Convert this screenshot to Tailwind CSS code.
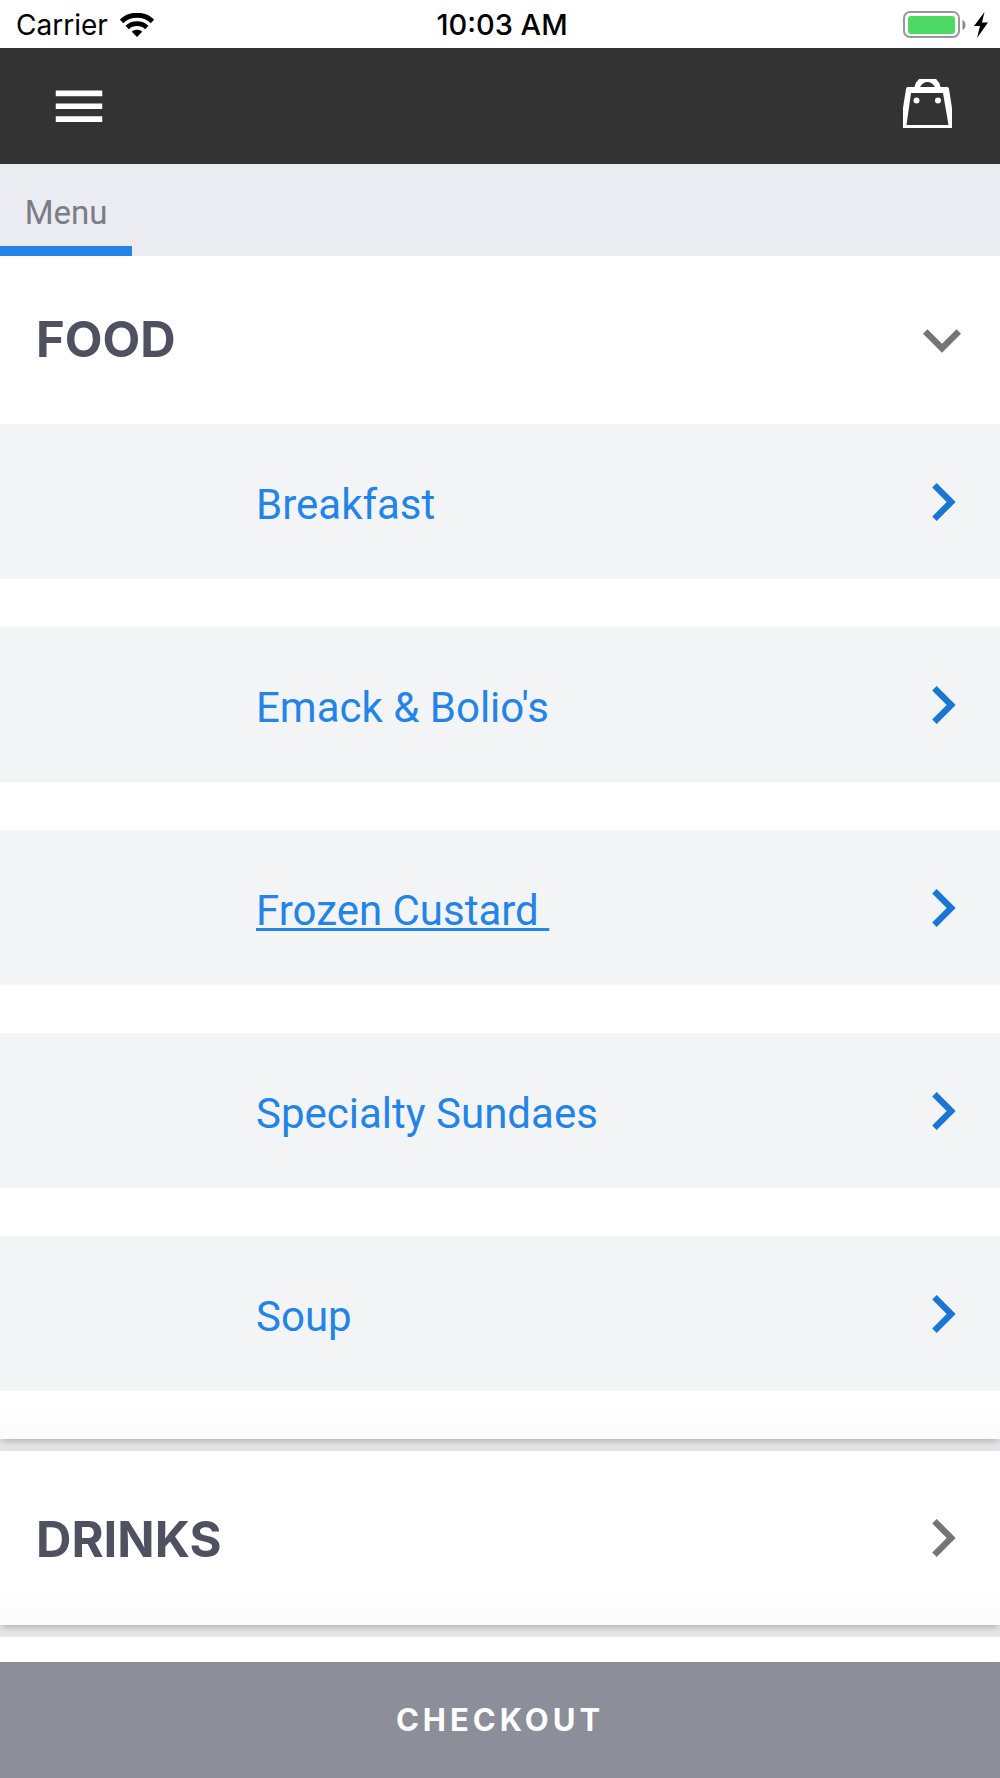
<!DOCTYPE html>
<html lang="en">
<head>
  <meta charset="UTF-8" />
  <meta name="viewport" content="width=device-width, initial-scale=1.0"/>
  <title>Menu</title>
  <script src="https://cdn.jsdelivr.net/npm/@tailwindcss/browser@4"></script>
</head>
<body class="min-h-screen flex flex-col bg-white font-['Inter',sans-serif]">
  <!-- status bar -->
  <div class="h-12 grid grid-cols-3 items-center pl-4 pr-3 pt-0.5 text-black text-[28px]">
    <div class="flex items-center gap-3">
      <span>Carrier</span>
      <svg class="w-[34px] h-6" viewBox="0 0 34 24" fill="none" stroke="#000">
        <path d="M1.5 8.4C10 0.2 24 0.2 32.5 8.4" stroke-width="5"/>
        <path d="M7.200 14.4C12.6 9.4 21.4 9.4 26.800 14.4" stroke-width="4.8"/>
        <path d="M17 24L11.8 18.8C14.6 16.2 19.4 16.2 22.2 18.8Z" fill="#000" stroke="none"/>
      </svg>
    </div>
    <span class="text-center text-[29px] font-medium">10:03 AM</span>
    <div class="flex items-center justify-end gap-2">
      <svg class="w-[63px] h-7" viewBox="0 0 63 28">
        <rect x="1" y="1" width="55" height="25" rx="6" fill="#fff" stroke="#999" stroke-width="2"/>
        <rect x="5" y="5" width="47" height="18" rx="3" fill="#4cd964"/>
        <path d="M59.500 9C63.500 10.500 63.500 17.500 59.500 19Z" fill="#8a8a8a"/>
      </svg>
      <svg class="w-[14px] h-[26px]" viewBox="0 0 14 26" fill="#000">
        <path d="M10.500 0L0 14H6L3 26L14 10.500H8Z"/>
      </svg>
    </div>
  </div>

  <nav class="h-[116px] bg-[#333] flex items-center justify-between px-12">
    <button type="button" aria-label="Open menu">
      <svg class="w-[62px] h-[62px]" viewBox="0 0 24 24" fill="#fff">
        <path d="M3 18.200h18v-2.200H3v2.200zm0-5h18v-2.200H3v2.200zm0-7.200v2.200h18V6H3z"/>
      </svg>
    </button>
    <button type="button" aria-label="Bag" class="pb-1.5">
      <svg class="w-[49px] h-[49px]" viewBox="0 0 49 49">
        <path fill="#fff" fill-rule="evenodd" d="M3 10Q3 8 5 8H11.500Q12.500 3 16 0H33Q36.500 3 37.500 8H44Q46 8 46 10L49 29V49H0V29ZM8 14L3.500 46H45.500L40 14ZM17 8H32Q29 3 24.500 3Q20 3 17 8Z"/>
        <circle cx="13.500" cy="21.500" r="3" fill="#fff"/>
        <circle cx="35" cy="21.500" r="3" fill="#fff"/>
      </svg>
    </button>
  </nav>

  <div class="relative z-10 h-[92px] bg-[#ebecf1] flex">
    <a href="#" class="w-[132px] flex items-center justify-center pt-4 border-b-10 border-[#2484e6] text-[#7b7c88] text-[33px] font-['Roboto',sans-serif]">Menu</a>
  </div>

  <main class="flex-1 bg-white">
    <div class="bg-[#e7e7e9] flex flex-col gap-3 pb-3">
      <!-- Food -->
      <section class="bg-linear-to-t from-[#fbfbfb] to-white to-[36px] shadow-[0_3px_8px_-2px_rgba(70,68,90,0.45)] pb-12">
        <h2>
          <button type="button" aria-expanded="true" class="w-full h-[168px] flex items-center justify-between pl-9 pr-5 text-[#4f5161] text-[49px] font-bold">
            FOOD
            <svg class="w-[76px] h-[76px]" viewBox="0 0 24 24" fill="#757575"><path d="M16.590 8.590L12 13.170 7.410 8.590 6 10l6 6 6-6z"/></svg>
          </button>
        </h2>
        <ul class="flex flex-col gap-12 bg-white text-[#2484e6] text-[42px] font-['Roboto',sans-serif]">
          <li>
            <a href="#" class="h-[155px] bg-[#f3f4f6] flex items-center justify-between pl-64 pr-[19px]">
              <span class="pt-1.5">Breakfast</span>
              <svg class="w-[76px] h-[76px]" viewBox="0 0 24 24" fill="#1976d2"><path d="M10 6L8.590 7.410 13.170 12l-4.580 4.590L10 18l6-6z"/></svg>
            </a>
          </li>
          <li>
            <a href="#" class="h-[155px] bg-[#f3f4f6] flex items-center justify-between pl-64 pr-[19px]">
              <span class="pt-1.5">Emack &amp; Bolio's</span>
              <svg class="w-[76px] h-[76px]" viewBox="0 0 24 24" fill="#1976d2"><path d="M10 6L8.590 7.410 13.170 12l-4.580 4.590L10 18l6-6z"/></svg>
            </a>
          </li>
          <li>
            <a href="#" class="h-[155px] bg-[#f3f4f6] flex items-center justify-between pl-64 pr-[19px]">
              <span class="pt-1.5 underline decoration-3 underline-offset-3">Frozen Custard&nbsp;</span>
              <svg class="w-[76px] h-[76px]" viewBox="0 0 24 24" fill="#1976d2"><path d="M10 6L8.590 7.410 13.170 12l-4.580 4.590L10 18l6-6z"/></svg>
            </a>
          </li>
          <li>
            <a href="#" class="h-[155px] bg-[#f3f4f6] flex items-center justify-between pl-64 pr-[19px]">
              <span class="pt-1.5">Specialty Sundaes</span>
              <svg class="w-[76px] h-[76px]" viewBox="0 0 24 24" fill="#1976d2"><path d="M10 6L8.590 7.410 13.170 12l-4.580 4.590L10 18l6-6z"/></svg>
            </a>
          </li>
          <li>
            <a href="#" class="h-[155px] bg-[#f3f4f6] flex items-center justify-between pl-64 pr-[19px]">
              <span class="pt-1.5">Soup</span>
              <svg class="w-[76px] h-[76px]" viewBox="0 0 24 24" fill="#1976d2"><path d="M10 6L8.590 7.410 13.170 12l-4.580 4.590L10 18l6-6z"/></svg>
            </a>
          </li>
        </ul>
      </section>

      <!-- Drinks -->
      <section class="bg-linear-to-t from-[#fbfbfb] to-white to-[36px] shadow-[0_3px_8px_-2px_rgba(70,68,90,0.45)]">
        <h2>
          <button type="button" aria-expanded="false" class="w-full h-[174px] flex items-center justify-between pl-9 pr-[19px] text-[#4f5161] text-[49px] font-bold">
            <span class="pt-1">DRINKS</span>
            <svg class="w-[76px] h-[76px]" viewBox="0 0 24 24" fill="#757575"><path d="M10 6L8.590 7.410 13.170 12l-4.580 4.590L10 18l6-6z"/></svg>
          </button>
        </h2>
      </section>
    </div>
  </main>

  <button type="button" class="w-full h-[116px] bg-[#8c8e99] text-white text-[31px] font-bold tracking-[4px]">CHECKOUT</button>
</body>
</html>
